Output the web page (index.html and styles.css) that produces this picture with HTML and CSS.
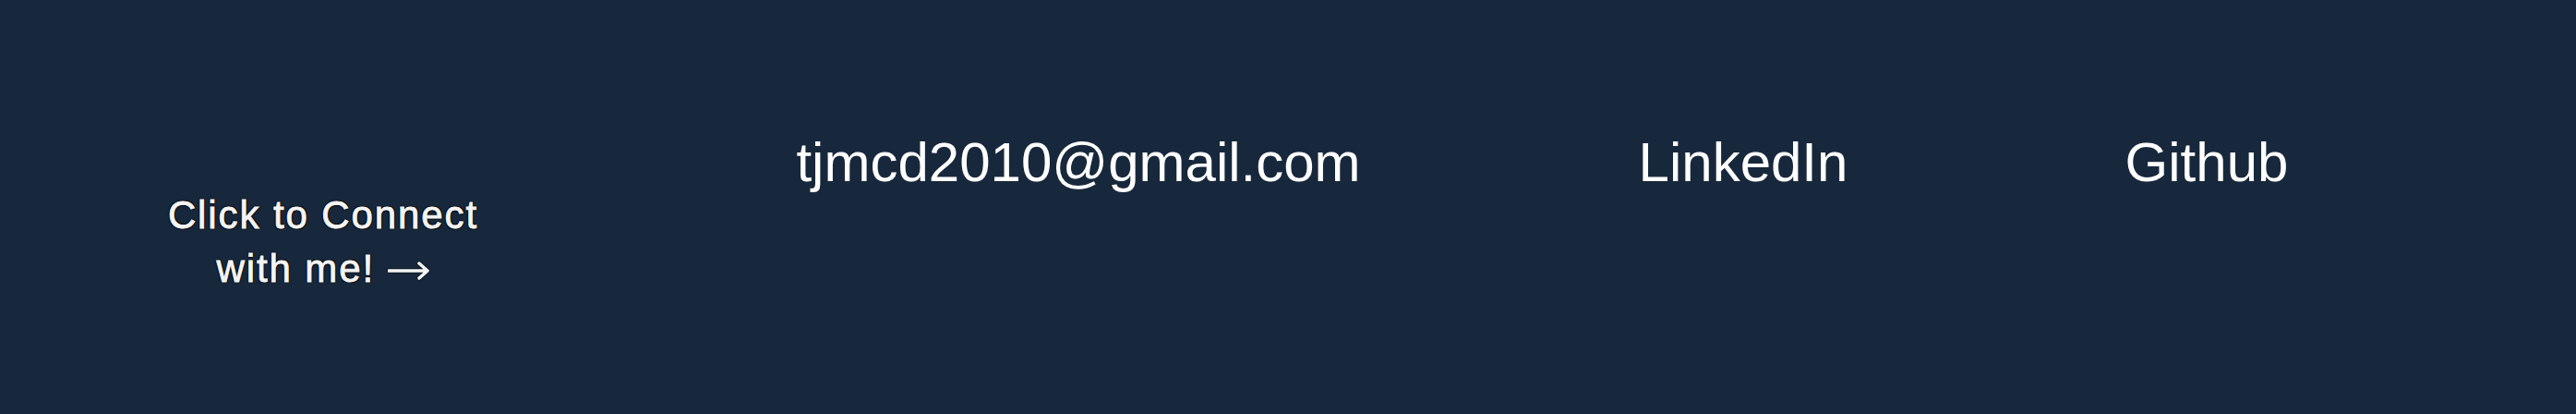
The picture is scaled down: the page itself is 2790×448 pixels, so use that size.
FILE: index.html
```html
<!DOCTYPE html>
<html lang="en">
<head>
<meta charset="utf-8">
<title>Connect</title>
<link rel="stylesheet" href="styles.css">
</head>
<body>
<footer class="footer">
  <a class="cta" href="#">Click to Connect<br>with me! <svg class="cta-arrow" width="46" height="22" viewBox="0 0 46 22" aria-hidden="true"><path d="M1 11 H43 M34 3 L43 11 L34 19" fill="none" stroke="#f4f4f4" stroke-width="3.5" stroke-linecap="round" stroke-linejoin="round"/></svg></a>
  <a class="link link-email" href="#">tjmcd2010@gmail.com</a>
  <a class="link link-linkedin" href="#">LinkedIn</a>
  <a class="link link-github" href="#">Github</a>
</footer>
</body>
</html>
```

FILE: styles.css
```css
html, body {
  margin: 0;
  padding: 0;
  background: #18283c;
}
.footer {
  display: grid;
  grid-template-columns: 700px 936px 504px 500px;
  align-items: start;
  height: 448px;
  box-sizing: border-box;
  padding-top: 141px;
  background: #18283c;
  font-family: "Liberation Sans", Arial, sans-serif;
}
.cta {
  margin-top: 63px;
  text-align: center;
  font-size: 42px;
  line-height: 58px;
  letter-spacing: 1.9px;
  color: #f4f4f4;
  text-decoration: none;
  -webkit-text-stroke: 0.9px #f4f4f4;
  text-shadow: 0 0 2px #05080d, 1px 1px 1px #05080d, -1px -1px 1px #05080d, 1px -1px 1px #05080d, -1px 1px 1px #05080d;
}
.cta-arrow {
  vertical-align: 1px;
  filter: drop-shadow(0 0 1px #05080d);
}
.link {
  text-align: center;
  font-size: 60px;
  color: #ffffff;
  text-decoration: none;
}
```
